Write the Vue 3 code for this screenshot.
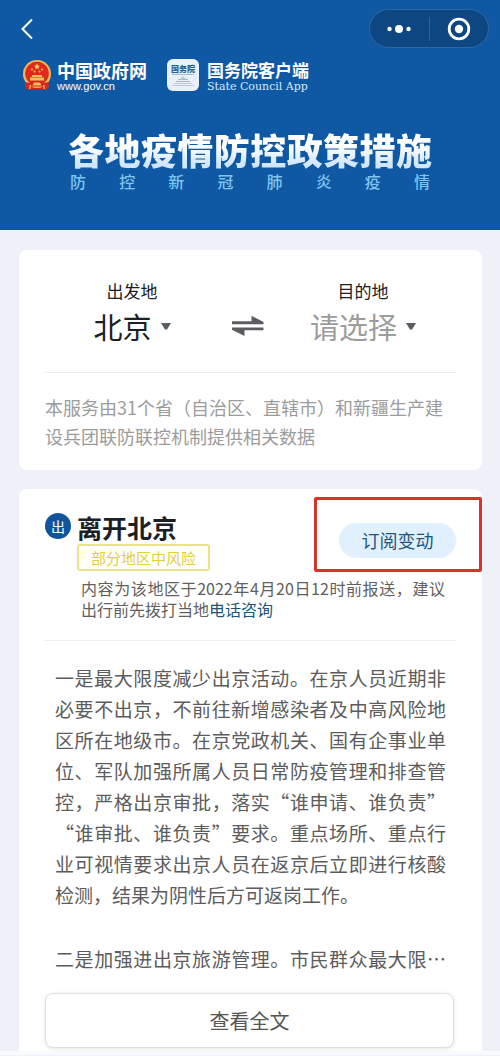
<template>
  <div class="page">
    <header class="header">
      <div class="nav">
        <button class="nav-back" type="button" aria-label="返回">
          <svg width="14" height="22" viewBox="0 0 14 22">
            <path d="M12 1.5 2.5 11 12 20.5" fill="none" stroke="#fff" stroke-width="2" />
          </svg>
        </button>
        <div class="capsule">
          <button type="button" aria-label="更多">
            <svg width="26" height="10" viewBox="0 0 26 10">
              <circle cx="3.5" cy="5" r="2.2" fill="#fff" />
              <circle cx="13" cy="5" r="4" fill="#fff" />
              <circle cx="22.5" cy="5" r="2.2" fill="#fff" />
            </svg>
          </button>
          <span class="capsule-line"></span>
          <button type="button" aria-label="关闭">
            <svg width="24" height="24" viewBox="0 0 24 24">
              <circle cx="12" cy="12" r="9.8" fill="none" stroke="#fff" stroke-width="2.8" />
              <circle cx="12" cy="12" r="4.2" fill="#fff" />
            </svg>
          </button>
        </div>
      </div>

      <div class="brands">
        <div class="brand">
          <!-- 国徽 -->
          <svg width="30" height="32" viewBox="0 0 30 32">
            <path d="M4 20 3.500 29l3 1.500h17l3-1.500L26 20z" fill="#d3271d" />
            <circle cx="15" cy="15" r="14" fill="#f2b75a" />
            <circle cx="15" cy="14.500" r="11.800" fill="#dc2a1c" />
            <path d="m15 4.600.9 2 2.100.2-1.600 1.400.5 2.100-1.900-1.100-1.900 1.100.5-2.100L12 6.800l2.100-.2z" fill="#f6cf67" />
            <g fill="#f3bd58">
              <circle cx="10" cy="10.500" r="1" />
              <circle cx="12.500" cy="12.500" r="1" />
              <circle cx="17.500" cy="12.500" r="1" />
              <circle cx="20" cy="10.500" r="1" />
              <path d="M10.500 16h9l1 2h-11zM8 18.500h14v3H8z" />
            </g>
            <path d="M3.500 23c4 1.500 6 .5 8-1h7c2 1.500 4 2.500 8 1v6l-3 1.500-3-3h-11l-3 3-3-1.500z" fill="#d3271d" />
            <path d="M12 23.500h6l1.500 3h-9z" fill="#f3bd58" />
            <path d="M8.500 26 7.500 30M21.500 26l1 4" stroke="#f3bd58" stroke-width="1.200" />
          </svg>
          <div class="brand-text">
            <strong class="gov-name">中国政府网</strong>
            <span class="gov-url">www.gov.cn</span>
          </div>
        </div>
        <div class="brand brand-app">
          <div class="app-icon">
            <span class="app-icon-name">国务院</span>
            <svg width="24" height="13" viewBox="0 0 24 13">
              <path d="M1 .5h22" stroke="#a9bccb" />
              <path d="M12 2 9 5h6z" fill="#c3ccd8" />
              <path d="M7 5.500h10M5 7.500h14" stroke="#aab8c8" />
              <path d="M3 9.500h18M1 11.500h22" stroke="#c0cad6" />
            </svg>
          </div>
          <div class="brand-text">
            <strong class="app-name">国务院客户端</strong>
            <span class="app-en">State Council App</span>
          </div>
        </div>
      </div>

      <div class="banner">
        <h1>各地疫情防控政策措施</h1>
        <p>防 控 新 冠 肺 炎 疫 情</p>
      </div>
    </header>

    <main class="main">
      <section class="card route-card">
        <div class="route">
          <div class="place">
            <label for="from">出发地</label>
            <div class="place-select">
              <select id="from" v-model="from">
                <option v-for="city in cities" :key="city">{{ city }}</option>
              </select>
              <svg width="10" height="7" viewBox="0 0 10 7"><path d="M0 0h10L6 6.500H4z" fill="#5b5c62" /></svg>
            </div>
          </div>
          <button class="swap" type="button" aria-label="交换" @click="swap">
            <svg width="32" height="22" viewBox="0 0 32 22">
              <path d="M0 6.200h19.500V.8L31.500 7v2.200H0z" fill="#5b5c62" />
              <path d="M31.500 12.600H0v2.200l12.500 6.200v-5.800h19z" fill="#5b5c62" />
            </svg>
          </button>
          <div class="place">
            <label for="to">目的地</label>
            <div class="place-select">
              <select id="to" v-model="to" :class="{ 'is-empty': !to }">
                <option value="">请选择</option>
                <option v-for="city in cities" :key="city">{{ city }}</option>
              </select>
              <svg width="10" height="7" viewBox="0 0 10 7"><path d="M0 0h10L6 6.500H4z" fill="#5b5c62" /></svg>
            </div>
          </div>
        </div>
        <p class="source">本服务由31个省（自治区、直辖市）和新疆生产建设兵团联防联控机制提供相关数据</p>
      </section>

      <section class="card policy-card">
        <div class="policy-head">
          <span class="badge">出</span>
          <div class="policy-title">
            <h2>离开北京</h2>
            <span class="risk">部分地区中风险</span>
          </div>
          <div class="subscribe">
            <button type="button">订阅变动</button>
            <span class="mark"></span>
          </div>
        </div>
        <p class="notice">内容为该地区于2022年4月20日12时前报送，建议出行前先拨打当地<a href="#">电话咨询</a></p>
        <div class="policy-body">
          <p>一是最大限度减少出京活动。在京人员近期非必要不出京，不前往新增感染者及中高风险地区所在地级市。在京党政机关、国有企事业单位、军队加强所属人员日常防疫管理和排查管控，严格出京审批，落实“谁申请、谁负责”<wbr>“谁审批、谁负责”要求。重点场所、重点行业可视情要求出京人员在返京后立即进行核酸检测，结果为阴性后方可返岗工作。</p>
          <p class="cut">二是加强进出京旅游管理。市民群众最大限…</p>
        </div>
        <button class="more" type="button">查看全文</button>
      </section>
    </main>
    <div class="foot"></div>
  </div>
</template>

<script setup>
import { ref } from 'vue'

const cities = ['北京', '天津', '上海', '重庆']
const from = ref('北京')
const to = ref('')

// 两端都已选择时才交换
const swap = () => {
  if (!to.value) return
  const old = from.value
  from.value = to.value
  to.value = old
}
</script>

<style>
body {
  margin: 0;
  background: #eef2f8;
}
</style>

<style scoped>
.page {
  font-family: "Noto Sans CJK SC", "Noto Sans", sans-serif;
  color: #1a2026;
  background: #eef2f8;
}

h1,
h2,
p {
  margin: 0;
}

button {
  padding: 0;
  border: 0;
  background: none;
  font-family: inherit;
  cursor: pointer;
}

svg {
  display: block;
  flex-shrink: 0;
}

/* ===== 顶部 ===== */
.header {
  padding: 9px 0 39px;
  background: #0f59a4;
  color: #fff;
}

.nav {
  display: flex;
  align-items: center;
  justify-content: space-between;
  padding: 0 11px 0 20px;
}

.capsule {
  display: flex;
  align-items: center;
  box-sizing: border-box;
  width: 120px;
  height: 39px;
  border: 1px solid #2b68a8;
  border-radius: 20px;
  background: #0d4680;
}

.capsule button {
  flex: 1;
  display: flex;
  justify-content: center;
}

.capsule-line {
  width: 1px;
  height: 24px;
  background: #2f659d;
}

.brands {
  display: flex;
  align-items: flex-start;
  gap: 20px;
  height: 36px;
  padding: 0 22px;
  margin-top: 11px;
}

.brand {
  display: flex;
  align-items: flex-start;
  gap: 5px;
}

.brand-app {
  gap: 8px;
}

.brand-text {
  display: flex;
  flex-direction: column;
  padding-top: 1px;
  white-space: nowrap;
}

.gov-name {
  font-size: 18px;
  line-height: 20px;
}

.gov-url {
  font: 11px/13px "Liberation Sans", Arial, sans-serif;
}

.app-icon {
  display: flex;
  flex-direction: column;
  align-items: center;
  box-sizing: border-box;
  width: 32px;
  height: 32px;
  padding-top: 4px;
  border-radius: 6px;
  background: #e9f0f8;
}

.app-icon-name {
  font-size: 8px;
  font-weight: 900;
  line-height: 11px;
  color: #27648f;
}

.app-name {
  font-size: 17px;
  line-height: 20px;
}

.app-en {
  font: 11px/13px "DejaVu Serif", serif;
  color: #d5e8f8;
}

.banner {
  padding: 0 68px;
  margin-top: 34px;
}

.banner h1 {
  font-size: 36px;
  font-weight: 900;
  line-height: 40px;
  text-align-last: justify;
  white-space: nowrap;
  color: transparent;
  background: linear-gradient(#fff 40%, #cfe5fb 90%);
  background-clip: text;
}

.banner p {
  padding: 2px 2px 0;
  font-size: 16px;
  font-weight: 500;
  line-height: 20px;
  text-align-last: justify;
  color: #7fc4ee;
}

/* ===== 卡片 ===== */
.main {
  display: flex;
  flex-direction: column;
  gap: 19px;
  padding: 20px 18px 0 19px;
}

.card {
  border-radius: 8px;
  background: #fff;
}

.route-card {
  padding: 29px 26px 19px;
}

.route {
  display: grid;
  grid-template-columns: 1fr 57px 1fr;
  align-items: end;
  padding: 0 6px 23px 0;
  border-bottom: 1px solid #ededef;
}

.place {
  display: flex;
  flex-direction: column;
  align-items: center;
}

.place label {
  font-size: 17px;
  line-height: 24px;
}

.place-select {
  display: flex;
  align-items: center;
  gap: 9px;
  height: 46px;
}

.place-select select {
  appearance: none;
  field-sizing: content;
  padding: 0;
  border: 0;
  background: none;
  font-family: inherit;
  font-size: 29px;
  line-height: 46px;
  color: #1a2026;
}

.place-select select.is-empty {
  color: #9c9c9c;
}

.swap {
  display: flex;
  align-items: center;
  justify-content: center;
  height: 46px;
}

.source {
  margin-top: 20px;
  font-size: 18px;
  line-height: 29px;
  color: #9c9c9c;
}

/* ===== 政策 ===== */
.policy-card {
  padding: 24px 26px 3px;
  border-radius: 8px 8px 0 0;
}

.policy-head {
  display: flex;
  align-items: flex-start;
}

.badge {
  width: 26px;
  border-radius: 50%;
  background: #10559c;
  color: #fff;
  font-size: 14px;
  line-height: 26px;
  text-align: center;
}

.policy-title {
  flex: 1;
  display: flex;
  flex-direction: column;
  align-items: flex-start;
  gap: 3px;
  padding-left: 6px;
}

.policy-title h2 {
  font-size: 25px;
  line-height: 28px;
}

.risk {
  box-sizing: border-box;
  padding: 0 12px;
  border: 2px solid #ece388;
  border-radius: 3px;
  font-size: 15px;
  line-height: 23px;
  color: #dfcf3f;
}

.subscribe {
  position: relative;
  margin-top: 10px;
}

.subscribe button {
  width: 117px;
  border-radius: 18px;
  background: #e1f0fe;
  font-size: 18px;
  line-height: 35px;
  color: #1e567e;
}

/* 红框标注，盖在卡片上 */
.mark {
  position: absolute;
  inset: -26px -26px -14px -25px;
  border: 3px solid #d8332b;
  border-radius: 2px;
  pointer-events: none;
}

.notice {
  padding: 7px 11px 20px 36px;
  border-bottom: 1px solid #ededef;
  font-size: 16px;
  line-height: 21px;
  text-align: justify;
  color: #5f5f5f;
}

.notice a {
  color: #1d5578;
  text-decoration: none;
}

.policy-body {
  display: flex;
  flex-direction: column;
  gap: 33px;
  padding: 21px 10px 19px;
  font-size: 19px;
  line-height: 31px;
  text-align: justify;
  color: #5c5c5c;
}

.cut {
  text-align-last: justify;
}

.more {
  display: block;
  box-sizing: border-box;
  width: calc(100% - 2px);
  border: 1px solid #dbe0e2;
  border-radius: 8px;
  background: #fff;
  box-shadow: 0 1px 4px rgba(0, 0, 0, 0.1);
  font-size: 20px;
  line-height: 53px;
  color: #555;
}

.foot {
  height: 4px;
  background: #f8fafb;
}
</style>
